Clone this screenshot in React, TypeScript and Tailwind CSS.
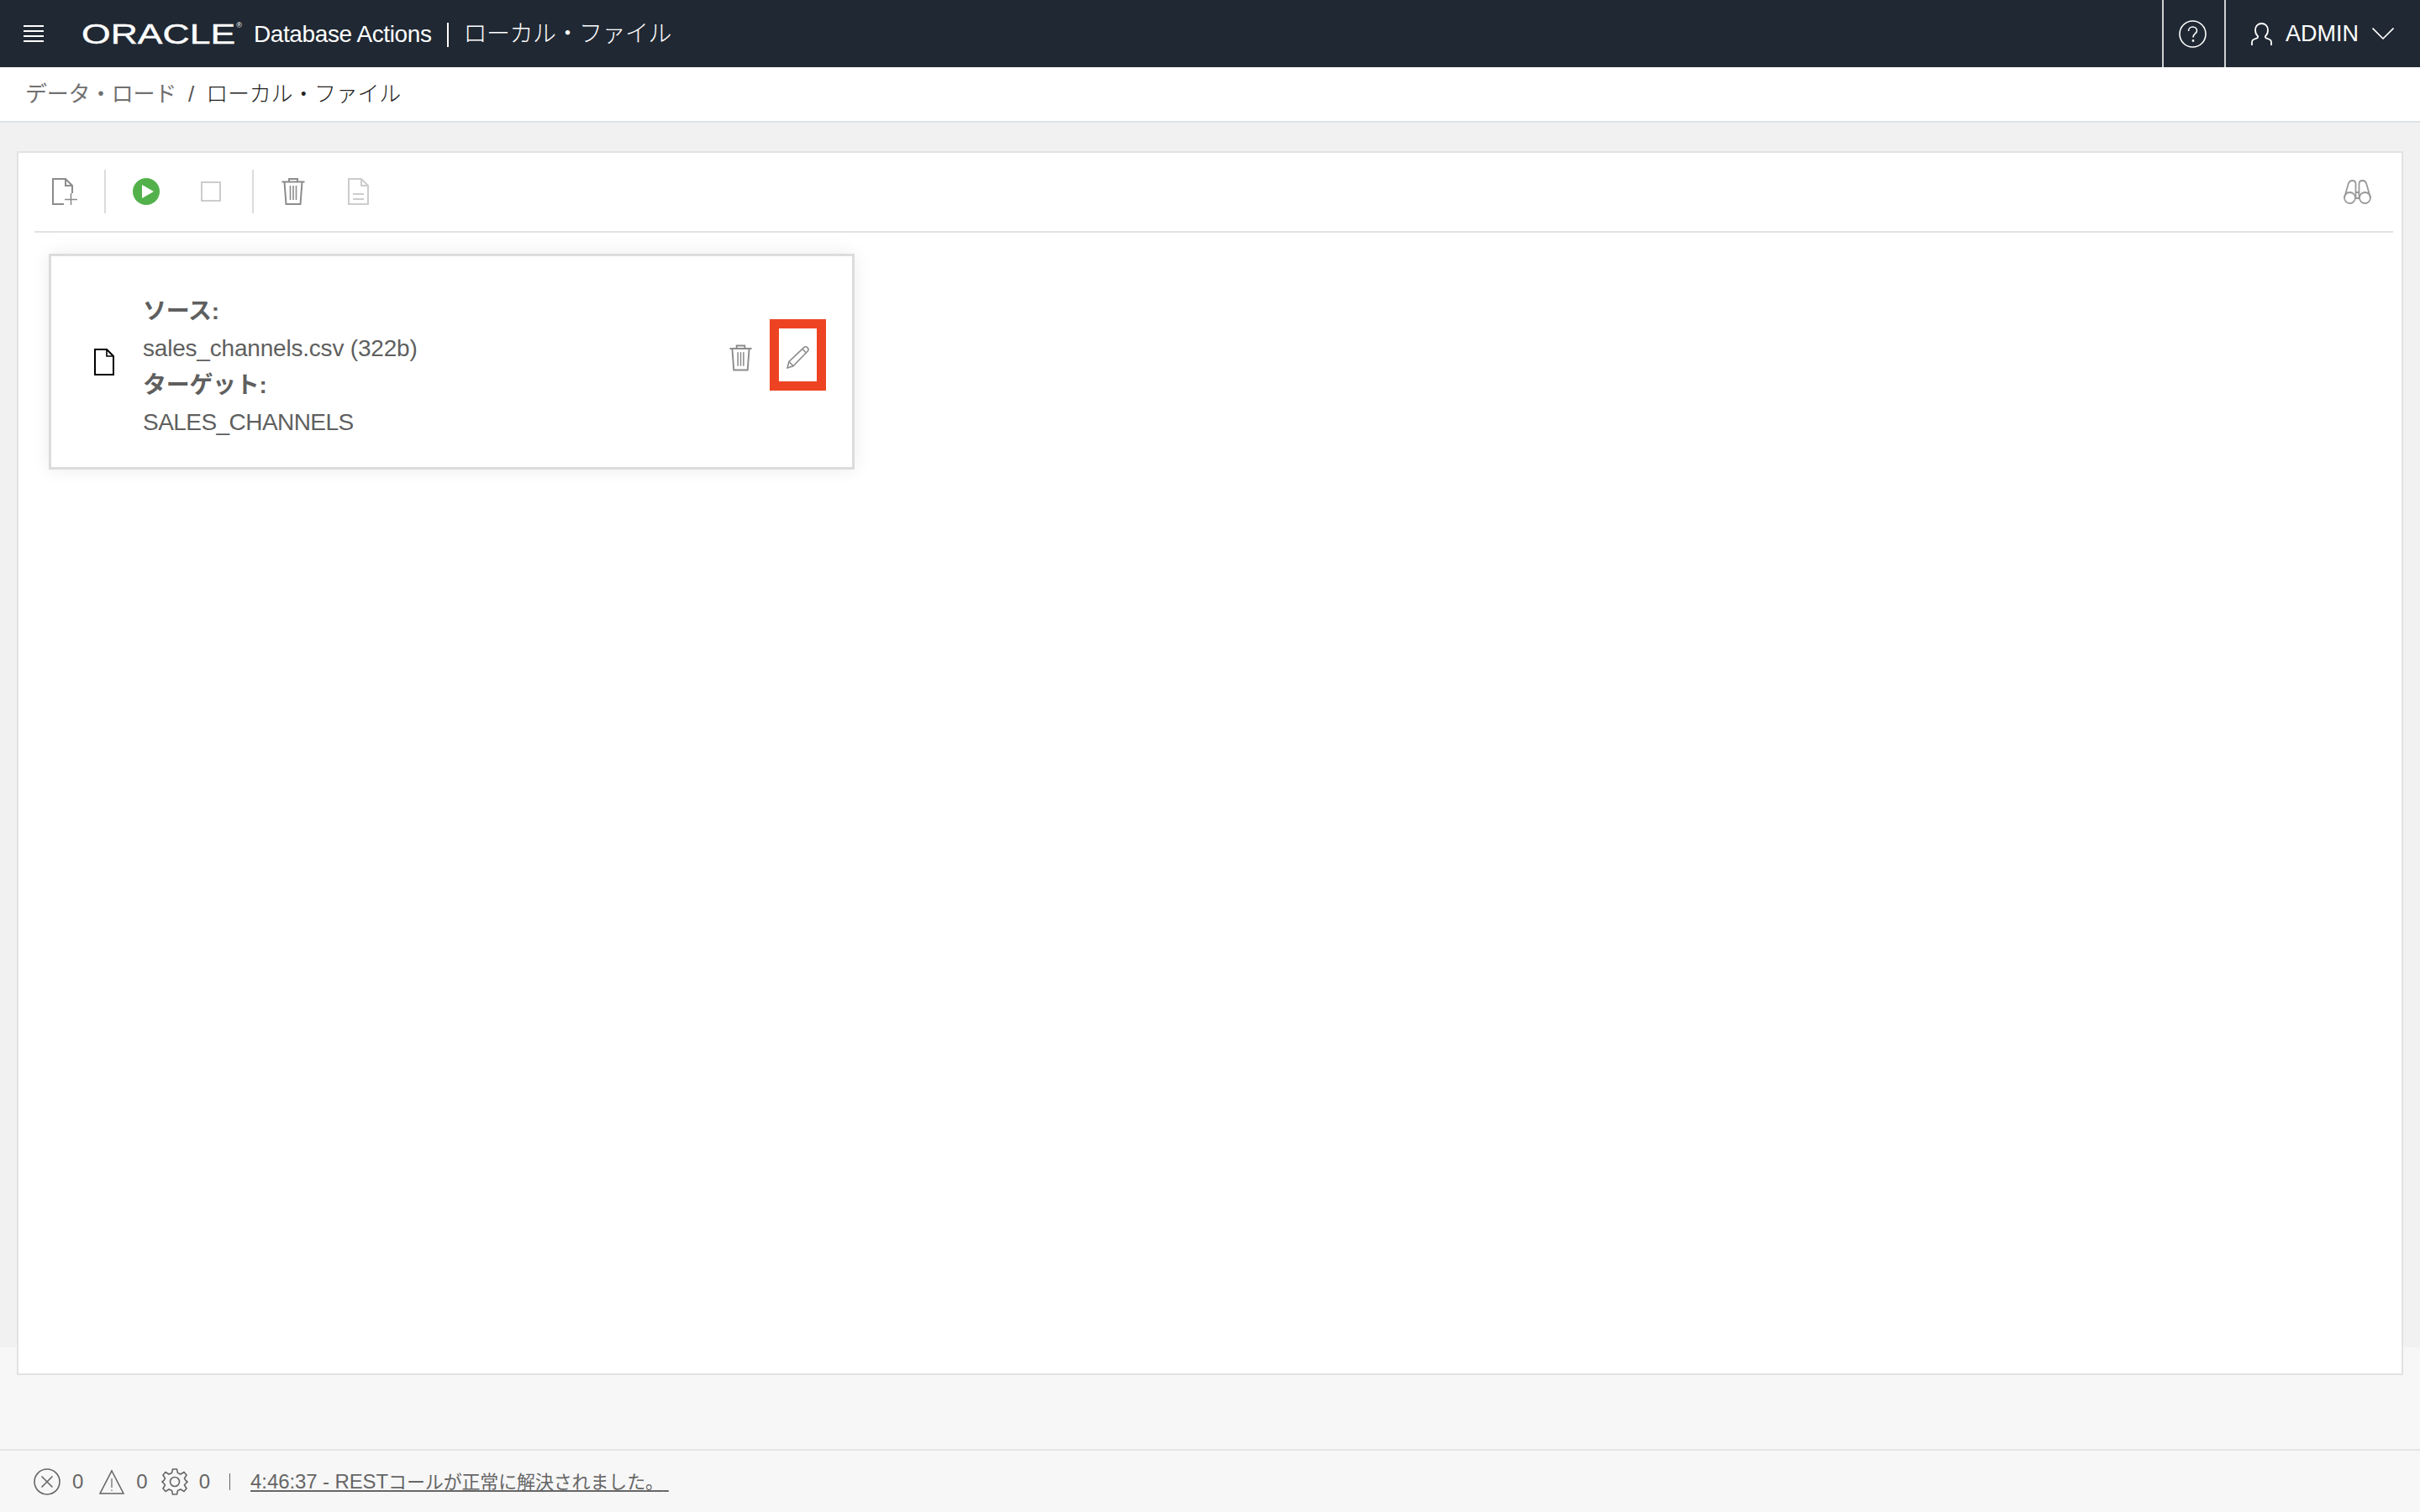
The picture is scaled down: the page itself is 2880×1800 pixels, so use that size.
import React from "react";

const TrashIcon: React.FC<{ className: string }> = ({ className }) => (
  <svg viewBox="0 0 28 32" fill="none" stroke="currentColor" strokeWidth="2" className={className}>
    <path d="M0.5 4.5H27.5M9 4.5V1H19V4.5M3.5 4.5L5.5 31H22.5L24.5 4.5" />
    <path d="M10.5 9V26M14 9V26M17.5 9V26" strokeWidth="1.6" />
  </svg>
);

const DocLines: React.FC<{ className: string }> = ({ className }) => (
  <svg viewBox="0 0 25 32" fill="none" stroke="currentColor" strokeWidth="2" className={className}>
    <path d="M1 1H16L24 9V31H1Z" />
    <path d="M16 1V9H24" />
    <path d="M6 19H19M6 25H19" />
  </svg>
);

const App: React.FC = () => {
  return (
    <div className="h-[1800px] w-[2880px] flex flex-col overflow-hidden bg-[#f7f7f7] font-['Liberation_Sans','Noto_Sans_CJK_JP',sans-serif]">
      {/* top bar */}
      <header className="h-[80px] shrink-0 flex items-center bg-[#202833] text-white">
        <svg viewBox="0 0 24 20" stroke="currentColor" strokeWidth="2" className="ml-[28px] w-[24px] h-[20px]">
          <path d="M0 1H24M0 7H24M0 13H24M0 19H24" />
        </svg>
        {/* logo: wide letters, stretched from the plain face */}
        <div className="ml-[45px] w-[191px] h-[34px] flex items-center relative">
          <span className="block origin-left scale-x-[1.31] text-[34px] leading-[34px] [-webkit-text-stroke:0.4px_white]">ORACLE</span>
          <span className="absolute right-0 top-[3px] text-[9px] leading-none">®</span>
        </div>
        <span className="ml-[14px] mt-[2px] text-[28px] tracking-[-0.4px] leading-none">Database Actions</span>
        <div className="ml-[18px] mt-[2px] w-[2px] h-[29px] bg-white" />
        <span className="ml-[18px] mt-[1px] text-[28px] font-light tracking-[-0.5px] leading-none">ローカル・ファイル</span>
        <div className="ml-auto w-[2px] h-full bg-[#cfd0d2]" />
        <svg viewBox="0 0 33 33" fill="none" stroke="currentColor" strokeWidth="1.6" className="ml-[18px] w-[33px] h-[33px]">
          <circle cx="16.5" cy="16.5" r="15.5" />
          <path d="M11.5 13C11.5 9.8 13.8 8 16.5 8C19.4 8 21.5 10 21.5 12.5C21.5 16 17 16 17 20.5" />
          <circle cx="17" cy="24.5" r="0.6" fill="currentColor" />
        </svg>
        <div className="ml-[21px] w-[2px] h-full bg-[#cfd0d2]" />
        <svg viewBox="0 0 25 27" fill="none" stroke="currentColor" strokeWidth="1.8" className="ml-[30px] w-[25px] h-[27px]">
          <path d="M7.5 15.5C5.5 13.8 5 11 5 8.5C5 4 8.2 1 12.5 1C16.8 1 20 4 20 8.5C20 11 19.5 13.8 17.5 15.5C16.5 16.4 16.5 17.6 18 18.4L22 20C23.4 20.6 24 21.8 24 23.2V27M7.5 15.5C8.5 16.4 8.5 17.6 7 18.4L3 20C1.6 20.6 1 21.8 1 23.2V27" />
        </svg>
        <span className="ml-[16px] text-[27px] leading-none">ADMIN</span>
        <svg viewBox="0 0 26 14" fill="none" stroke="currentColor" strokeWidth="1.6" className="ml-[16px] mr-[31px] w-[26px] h-[14px]">
          <path d="M0.5 0.5L13 13L25.5 0.5" />
        </svg>
      </header>

      {/* breadcrumb */}
      <nav className="h-[66px] shrink-0 flex items-center pl-[30px] bg-white border-b-2 border-[#dfe2e6] text-[26px] leading-none">
        <span className="text-[#707070] tracking-[-0.3px]">データ・ロード</span>
        <span className="ml-[14px] text-[#555555]">/</span>
        <span className="ml-[14px] font-light text-[#222222] tracking-[-0.25px]">ローカル・ファイル</span>
      </nav>

      {/* panel */}
      <main className="flex-1 pl-[20px] pt-[34px] bg-[linear-gradient(#f1f1f1_0,#f1f1f1_1458px,#f7f7f7_1458px)]">
        <section className="w-[2840px] h-[1457px] flex flex-col bg-white border-2 border-[#e2e2e2]">
          <div className="ml-[19px] mr-[10px] mt-[20px] pb-[21px] border-b-2 border-[#e2e2e2]">
            <div className="h-[52px] flex items-center">
              <svg viewBox="0 0 30 32" fill="none" stroke="#8c8c8c" strokeWidth="2" className="ml-[21px] w-[30px] h-[32px]">
                <path d="M14 31H1V1H16L24 9V18M16 1V9H24" />
                <path d="M15 25.5H30M22.5 18V32" strokeWidth="1.6" />
              </svg>
              <div className="ml-[32px] w-[2px] h-full bg-[#dcdcdc]" />
              <svg viewBox="0 0 32 32" className="ml-[32px] w-[32px] h-[32px]">
                <circle cx="16" cy="16" r="16" fill="#52b14b" />
                <path d="M11 8L25 16L11 24Z" fill="#ffffff" />
              </svg>
              <div className="ml-[49px] w-[24px] h-[24px] border-2 border-[#cccccc]" />
              <div className="ml-[37px] w-[2px] h-full bg-[#dcdcdc]" />
              <TrashIcon className="ml-[33px] w-[28px] h-[32px] text-[#8c8c8c]" />
              <DocLines className="ml-[51px] w-[25px] h-[32px] text-[#cccccc]" />
              <svg viewBox="0 0 33 29" fill="none" stroke="#999999" strokeWidth="1.8" className="ml-auto mr-[26px] w-[33px] h-[29px]">
                <circle cx="7.5" cy="21.5" r="6.5" />
                <circle cx="25.5" cy="21.5" r="6.5" />
                <path d="M1 21.5L5.5 5.5C6.3 2.2 8 1 10.5 1C13 1 14.5 2.5 14.5 5V21M32 21.5L27.5 5.5C26.7 2.2 25 1 22.5 1C20 1 18.5 2.5 18.5 5V21M14 15H19M14 22H19" />
              </svg>
            </div>
          </div>

          {/* source card */}
          <div className="ml-[36px] mt-[25px] w-[959px] h-[257px] flex items-center bg-white border-[3px] border-[#dcdcdc] shadow-[0_0_20px_rgba(0,0,0,0.08)]">
            <svg viewBox="0 0 24 32" fill="none" stroke="#000000" strokeWidth="2" className="ml-[51px] w-[24px] h-[32px]">
              <path d="M1 1H15L23 9V31H1Z" />
              <path d="M15 1V9H23" strokeWidth="1.6" />
            </svg>
            <div className="ml-[34px] mt-[12px] flex flex-col text-[28px] leading-[44px] text-[#5f5f5f]">
              <span className="font-bold tracking-[-0.3px]">ソース:</span>
              <span className="tracking-[-0.2px]">sales_channels.csv (322b)</span>
              <span className="font-bold tracking-[-0.3px]">ターゲット:</span>
              <span className="tracking-[-0.55px]">SALES_CHANNELS</span>
            </div>
            <TrashIcon className="ml-auto mb-[9px] w-[27px] h-[32px] text-[#8c8c8c]" />
            <div className="ml-[21px] mr-[31px] mb-[16px] w-[67px] h-[85px] flex items-center justify-center border-[11px] border-[#ee4323]">
              <svg viewBox="0 0 27 27" fill="none" stroke="#8c8c8c" strokeWidth="1.6" className="mt-[6px] w-[27px] h-[27px]">
                <path d="M1 26L3 18.5L20.5 1.8C21.8 0.6 23.7 0.6 25 1.9C26.3 3.2 26.3 5 25 6.3L8 23.8Z" />
                <path d="M3 18.5L8 23.8M19 3.5L23.5 8" />
              </svg>
            </div>
          </div>
        </section>
      </main>

      {/* status bar */}
      <footer className="h-[75px] shrink-0 flex items-center pl-[40px] bg-[#f7f7f7] border-t-2 border-[#e5e5e5] text-[24px] leading-none text-[#666666]">
        <svg viewBox="0 0 32 32" fill="none" stroke="currentColor" strokeWidth="1.6" className="w-[32px] h-[32px]">
          <circle cx="16" cy="16" r="15" />
          <path d="M9.5 9.5L22.5 22.5M22.5 9.5L9.5 22.5" />
        </svg>
        <span className="ml-[14px]">0</span>
        <svg viewBox="0 0 30 30" fill="none" stroke="currentColor" strokeWidth="1.6" className="ml-[19px] w-[30px] h-[30px]">
          <path d="M15 2L29 29H1Z" />
          <path d="M15 11V22M15 24.5V26" strokeWidth="1.2" />
        </svg>
        <span className="ml-[14px]">0</span>
        <svg viewBox="0 0 32 32" fill="none" stroke="currentColor" strokeWidth="1.6" className="ml-[16px] w-[32px] h-[32px]">
          <circle cx="16" cy="16" r="5.5" />
          <path d="M13.5 1H18.5L19.5 5.5L23 7L27 4.5L30 8L27.5 12L29 14.5L31 16L29 18L27.5 20L30 24L27 27.5L23 25L19.5 26.5L18.5 31H13.5L12.5 26.5L9 25L5 27.5L2 24L4.5 20L3 18L1 16L3 14.5L4.5 12L2 8L5 4.5L9 7L12.5 5.5Z" />
        </svg>
        <span className="ml-[13px]">0</span>
        <div className="ml-[23px] w-[1px] h-[20px] bg-[#666666]" />
        <span className="ml-[24px] underline tracking-[-0.1px]">
          4:46:37 - REST<span className="text-[22px] tracking-[-0.15px]">コールが正常に解決されました。{"\u00a0"}</span>
        </span>
      </footer>
    </div>
  );
};

export default App;
